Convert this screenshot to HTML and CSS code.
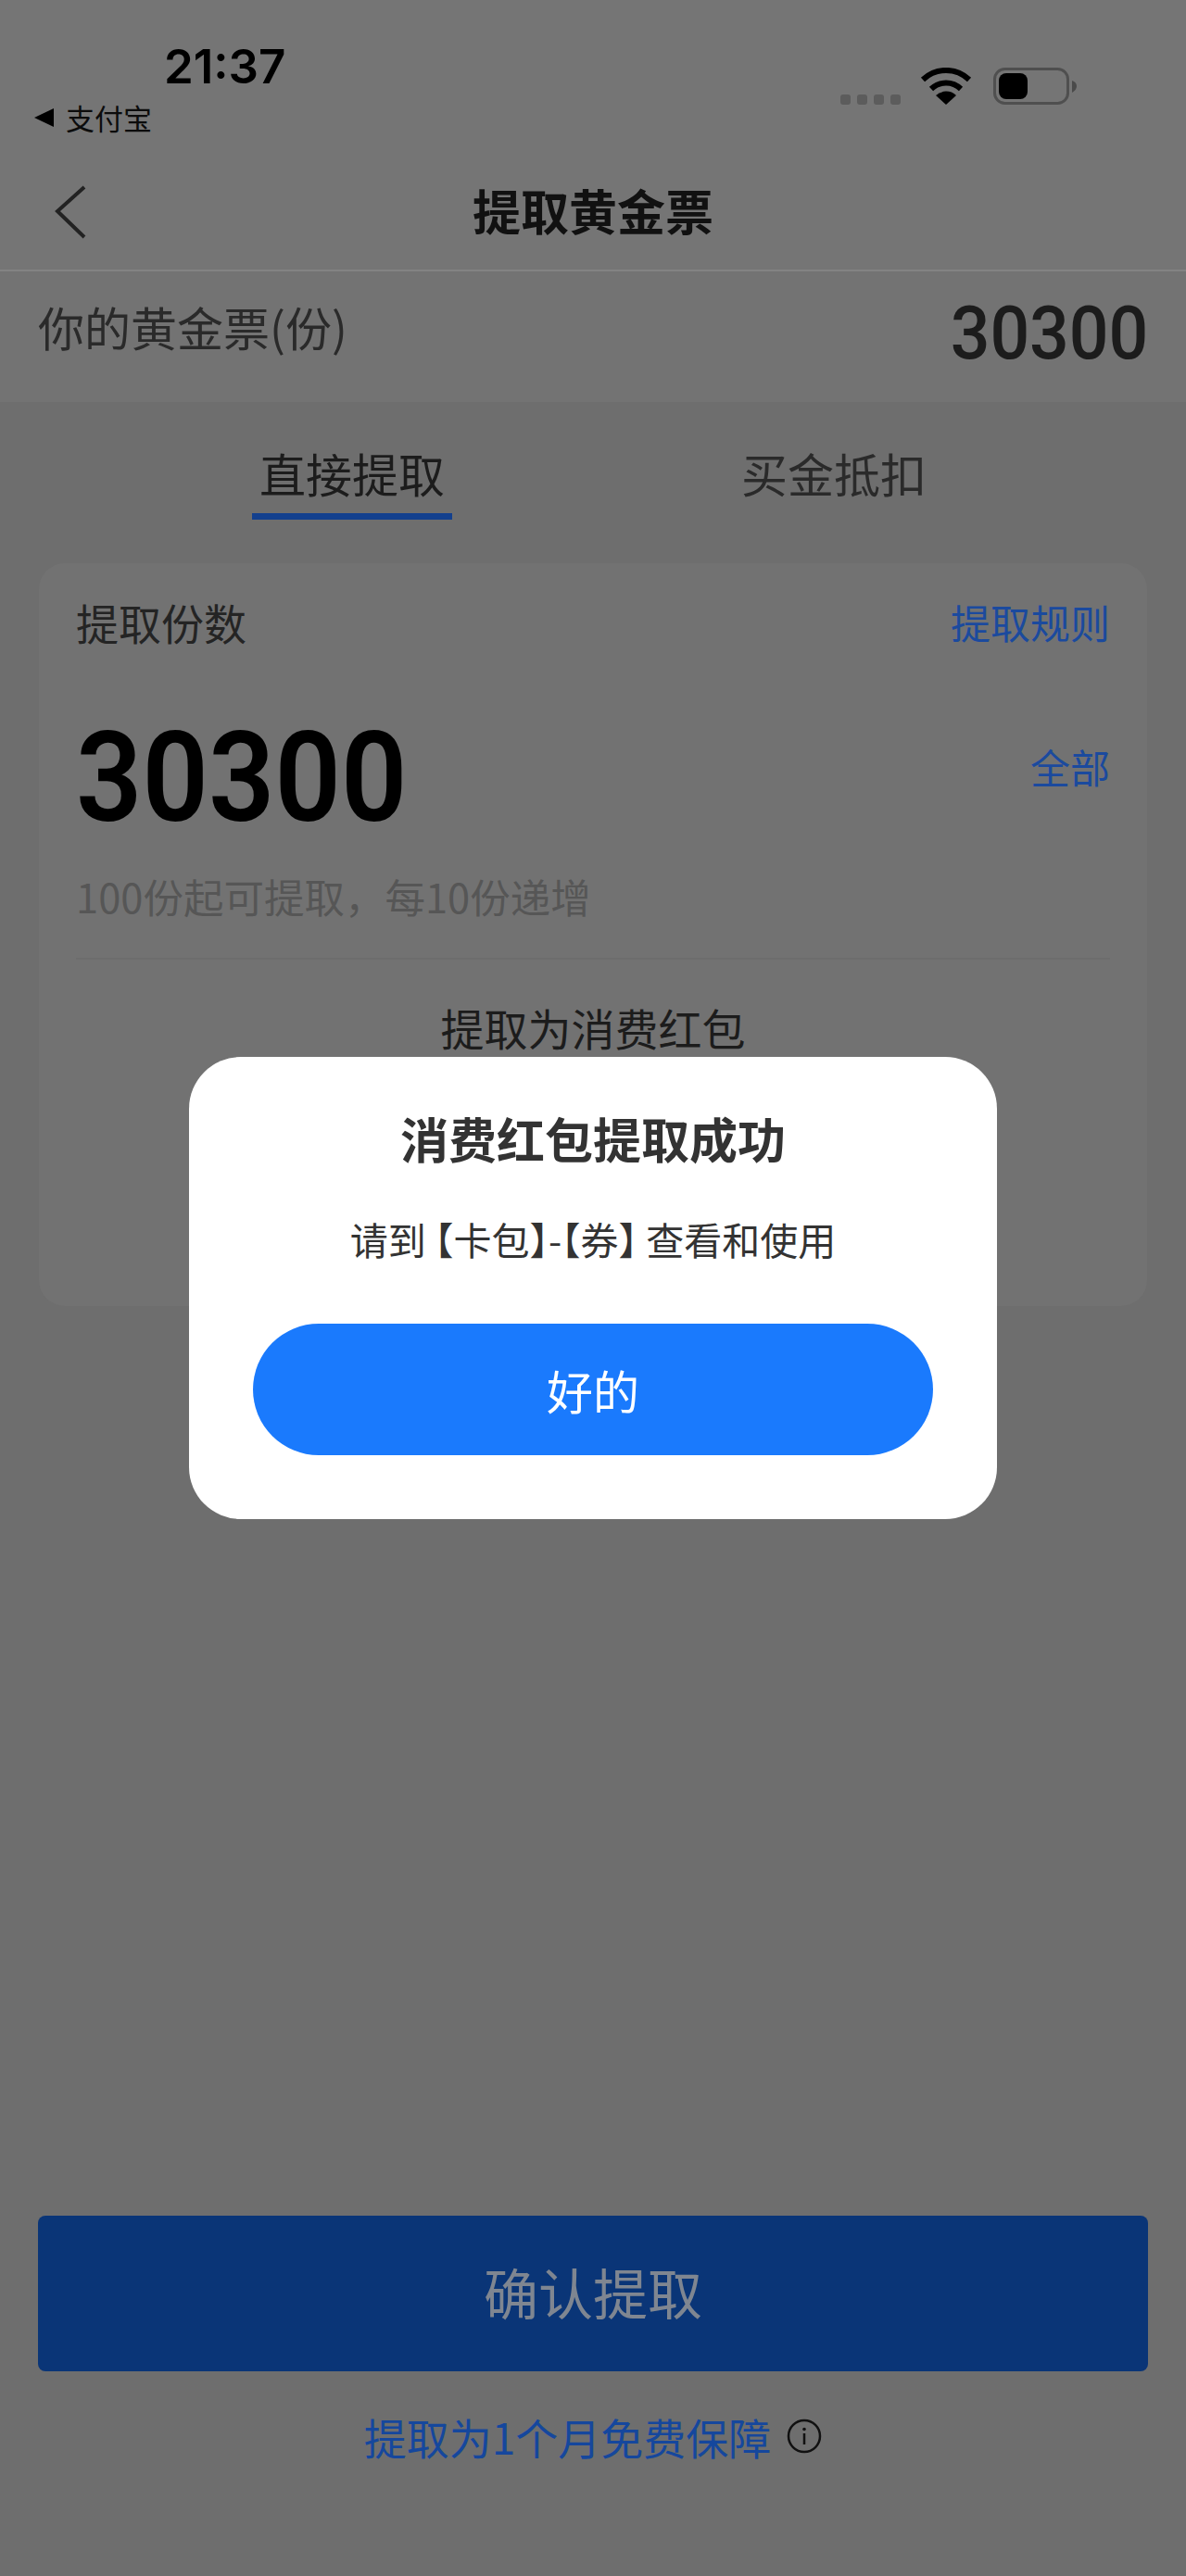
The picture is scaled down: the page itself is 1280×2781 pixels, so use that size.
FILE: index.html
```html
<!DOCTYPE html>
<html lang="zh-CN">
<head>
  <meta charset="UTF-8">
  <title>提取黄金票</title>
  <link rel="stylesheet" href="styles.css">
</head>
<body>

  <div class="page">
    <div class="status-bar">
      <div class="status-left">
        <div class="time">21:37</div>
        <div class="carrier"><span class="back-arrow"></span>支付宝</div>
      </div>
      <div class="status-right">
        <div class="signal"><span></span><span></span><span></span><span></span></div>
        <svg class="wifi" width="56" height="40" viewBox="0 0 56 40">
          <path d="M3 13 A36 36 0 0 1 53 13" fill="none" stroke="#000" stroke-width="6"/>
          <path d="M12 23 A23 23 0 0 1 44 23" fill="none" stroke="#000" stroke-width="6"/>
          <path d="M28 40 L17 30 A16 16 0 0 1 39 30 Z" fill="#000"/>
        </svg>
        <svg class="battery" width="90" height="40" viewBox="0 0 90 40">
          <rect x="1.5" y="1.5" width="79" height="37" rx="11" fill="none" stroke="#4f4f4f" stroke-width="3"/>
          <rect x="6" y="6" width="31" height="28" rx="8" fill="#000"/>
          <path d="M85 14 C88 15 90 17 90 20 C90 23 88 25 85 27 Z" fill="#4a4a4a"/>
        </svg>
      </div>
    </div>

    <div class="nav">
      <svg class="nav-back" width="36" height="58" viewBox="0 0 36 58">
        <path d="M32 2 L3 28 L32 56" fill="none" stroke="#222" stroke-width="4"/>
      </svg>
      <div class="nav-title">提取黄金票</div>
    </div>

    <div class="balance">
      <div class="balance-label">你的黄金票(份)</div>
      <div class="balance-num">30300</div>
    </div>

    <div class="tabs">
      <div class="tab active">直接提取</div>
      <div class="tab">买金抵扣</div>
    </div>

    <div class="card">
      <div class="card-head">
        <div class="card-title">提取份数</div>
        <div class="link">提取规则</div>
      </div>
      <div class="amount-row">
        <div class="amount">30300</div>
        <div class="link all">全部</div>
      </div>
      <div class="hint">100份起可提取，每10份递增</div>
      <div class="card-foot">提取为消费红包</div>
    </div>

    <div class="bottom">
      <div class="confirm">确认提取</div>
      <div class="free">
        <span>提取为1个月免费保障</span>
        <svg width="38" height="38" viewBox="0 0 38 38">
          <circle cx="19" cy="19" r="17" fill="none" stroke="#111" stroke-width="2.5"/>
          <circle cx="19" cy="11.5" r="1.8" fill="#111"/>
          <path d="M19 16 V28" stroke="#111" stroke-width="2.5"/>
        </svg>
      </div>
    </div>
  </div>

  <div class="dialog">
    <div class="dialog-title">消费红包提取成功</div>
    <div class="dialog-text">请到 【卡包】-【券】 查看和使用</div>
    <div class="dialog-btn">好的</div>
  </div>

</body>
</html>
```

FILE: styles.css
```css
* {
  box-sizing: border-box;
}

body {
  margin: 0;
  position: relative;
  width: 1280px;
  height: 2781px;
  overflow: hidden;
  font-family: "Noto Sans CJK SC", "Noto Sans", sans-serif;
  background-color: #6e6e6e;
  color: #222;
}

.page {
  display: flex;
  flex-direction: column;
  height: 100%;
}

/* status bar */
.status-bar {
  height: 165px;
  display: flex;
  justify-content: space-between;
  background-color: #757575;
}

.status-left {
  padding: 42px 0 0 37px;
}

.time {
  margin-left: 140px;
  font-family: Inter, sans-serif;
  font-size: 51px;
  font-weight: 600;
  line-height: 60px;
  color: #000;
}

.carrier {
  display: flex;
  align-items: center;
  margin-top: 8px;
  font-size: 31px;
  line-height: 34px;
  color: #0c0c0c;
}

.back-arrow {
  width: 0;
  height: 0;
  margin-right: 13px;
  border-top: 10px solid transparent;
  border-bottom: 10px solid transparent;
  border-right: 21px solid #000;
}

.status-right {
  display: flex;
  align-items: flex-start;
  padding: 73px 118px 0 0;
}

.signal {
  display: flex;
  gap: 7px;
  margin: 29px 21px 0 0;
}

.signal span {
  width: 11px;
  height: 11px;
  border-radius: 3px;
  background-color: #5c5c5c;
}

.battery {
  margin-left: 23px;
}

/* nav */
.nav {
  position: relative;
  height: 128px;
  display: flex;
  justify-content: center;
  align-items: center;
  padding-bottom: 2px;
  background-color: #757575;
  border-bottom: 2px solid #838383;
}

.nav-back {
  position: absolute;
  left: 59px;
  top: 35px;
}

.nav-title {
  font-size: 52px;
  font-weight: 700;
  line-height: 60px;
  color: #111;
}

/* balance */
.balance {
  height: 141px;
  display: flex;
  justify-content: space-between;
  align-items: center;
  padding: 0 41px 0 41px;
  background-color: #737373;
}

.balance-label {
  padding-bottom: 24px;
  font-size: 50px;
  color: #2a2a2a;
}

.balance-num {
  padding-bottom: 8px;
  font-family: Roboto, sans-serif;
  font-size: 80px;
  font-weight: 500;
  color: #1c1c1c;
  transform: scaleX(0.94);
  transform-origin: right center;
}

/* tabs */
.tabs {
  display: flex;
  height: 127px;
  padding: 45px 0 0 272px;
  gap: 304px;
}

.tab {
  width: 216px;
  font-size: 50px;
  line-height: 62px;
  text-align: center;
  color: #2a2a2a;
}

.tab.active {
  height: 82px;
  border-bottom: 7px solid #13408e;
  color: #1c1c1c;
}

/* card */
.card {
  height: 802px;
  margin: 47px 42px 0;
  padding: 33px 40px 0;
  border-radius: 28px;
  background-color: #727272;
}

.card-head {
  display: flex;
  justify-content: space-between;
  align-items: center;
  height: 60px;
}

.card-title {
  font-size: 46px;
  color: #242424;
}

.link {
  font-size: 43px;
  color: #1b4a9e;
}

.amount-row {
  display: flex;
  justify-content: space-between;
  align-items: flex-start;
  margin-top: 59px;
}

.amount {
  font-family: Roboto, sans-serif;
  font-size: 136px;
  font-weight: 600;
  line-height: 160px;
  color: #000;
  transform: scaleX(0.92);
  transform-origin: left center;
}

.all {
  margin-top: 36px;
}

.hint {
  margin-top: 21px;
  padding-bottom: 39px;
  font-size: 43.5px;
  line-height: 54px;
  color: #565656;
  border-bottom: 2px solid #6d6d6d;
}

.card-foot {
  margin-top: 43px;
  font-size: 47px;
  line-height: 60px;
  text-align: center;
  color: #1c1c1c;
}

/* bottom */
.bottom {
  margin-top: auto;
  padding: 0 41px 123px;
}

.confirm {
  height: 168px;
  display: flex;
  justify-content: center;
  align-items: center;
  padding-bottom: 6px;
  border-radius: 8px;
  font-size: 59px;
  color: #7f8691;
  background-color: #0a3577;
}

.free {
  display: flex;
  justify-content: center;
  align-items: center;
  gap: 17px;
  margin-top: 42px;
  font-size: 46px;
  line-height: 56px;
  color: #15479d;
}

/* dialog */
.dialog {
  position: absolute;
  left: 204px;
  top: 1141px;
  width: 872px;
  height: 499px;
  padding-top: 53px;
  border-radius: 56px;
  background-color: #fff;
  text-align: center;
}

.dialog-title {
  font-size: 52px;
  font-weight: 700;
  line-height: 70px;
  color: #333;
}

.dialog-text {
  margin-top: 45px;
  font-size: 41px;
  line-height: 56px;
  font-feature-settings: "halt";
  color: #333;
}

.dialog-btn {
  width: 734px;
  height: 142px;
  margin: 64px auto 0;
  border-radius: 71px;
  font-size: 50px;
  line-height: 142px;
  color: #fff;
  background-color: #1a7afd;
}
```
